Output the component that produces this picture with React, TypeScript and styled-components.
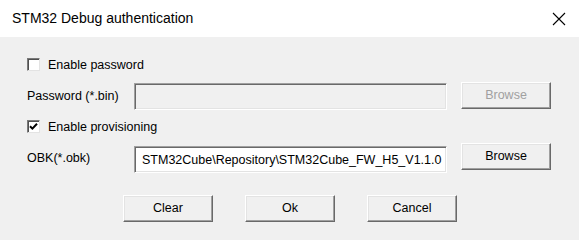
import React, { useState } from 'react';
import styled, { createGlobalStyle } from 'styled-components';

const GlobalStyle = createGlobalStyle`
  html, body {
    margin: 0;
    padding: 0;
    background: #f0f0f0;
  }

  body {
    font-family: "Liberation Sans", Arial, sans-serif;
  }
`;

const Dialog = styled.div`
  width: 579px;
  height: 240px;
  display: flex;
  flex-direction: column;
  background: #f0f0f0;
  overflow: hidden;
`;

const TitleBar = styled.div`
  height: 37px;
  flex-shrink: 0;
  background: #ffffff;
  display: flex;
  align-items: center;
  justify-content: space-between;
  padding: 0 13px 0 12px;
  box-sizing: border-box;
`;

const Title = styled.span`
  font-size: 14px;
  color: #000000;
  padding-bottom: 1px;
`;

const CloseButton = styled.button`
  background: none;
  border: none;
  padding: 0;
  width: 14px;
  height: 14px;
  display: flex;
  margin-top: 1px;
`;

const Body = styled.div`
  display: flex;
  flex-direction: column;
  padding: 21px 0 0 27px;
  font-size: 12.5px;
  color: #000000;
`;

interface RowProps {
  top: number;
  height: number;
}

const Row = styled.div<RowProps>`
  display: flex;
  align-items: center;
  margin-top: ${(props) => props.top}px;
  height: ${(props) => props.height}px;
`;

const CheckRow = styled.label`
  display: flex;
  align-items: center;
  gap: 8px;
  cursor: default;
`;

const Box = styled.span`
  width: 13px;
  height: 13px;
  box-sizing: border-box;
  background: #ffffff;
  border: 1px solid;
  border-color: #7a7a7a #e3e3e3 #e3e3e3 #7a7a7a;
  box-shadow: inset 1px 1px 0 #505050;
  display: flex;
  align-items: center;
  justify-content: center;
`;

const Label = styled.span`
  width: 107px;
  flex-shrink: 0;
`;

interface FieldProps {
  disabled?: boolean;
  offset: number;
}

const Field = styled.div<FieldProps>`
  width: 313px;
  height: 27px;
  box-sizing: border-box;
  align-self: flex-start;
  margin-top: ${(props) => props.offset}px;
  background: ${(props) => (props.disabled ? '#f0f0f0' : '#ffffff')};
  border: 1px solid;
  border-color: #a0a0a0 #ffffff #ffffff #a0a0a0;
  box-shadow: inset 1px 1px 0 #696969, inset -1px -1px 0 #e3e3e3;
  padding: 0 0 0 7px;
  display: flex;
  align-items: center;
  overflow: hidden;
  white-space: nowrap;
  font-size: 12.5px;
`;

interface ButtonProps {
  disabled?: boolean;
}

const Button = styled.button<ButtonProps>`
  width: 90px;
  height: 27px;
  box-sizing: border-box;
  padding: 0 0 1px;
  font-family: "Liberation Sans", Arial, sans-serif;
  font-size: 12.5px;
  color: ${(props) => (props.disabled ? '#a0a0a0' : '#000000')};
  background: #f0f0f0;
  border: 1px solid;
  border-color: #ffffff #696969 #696969 #ffffff;
  box-shadow: inset -1px -1px 0 #a0a0a0, inset 1px 1px 0 #e3e3e3;
`;

const BrowseButton = styled(Button)`
  margin-left: 14px;
  align-self: flex-start;
`;

const Actions = styled.div`
  display: flex;
  gap: 32px;
  margin: 23px 0 0 96px;
`;

function CloseIcon() {
  return (
    <svg width="14" height="14" viewBox="0 0 14 14">
      <path d="M1 1 L13 13 M13 1 L1 13" stroke="#000" strokeWidth="1.1" fill="none" />
    </svg>
  );
}

function CheckMark() {
  return (
    <svg width="9" height="9" viewBox="0 0 9 9">
      <path d="M1 4.2 L3.4 6.6 L8 1.8" stroke="#000" strokeWidth="2" fill="none" />
    </svg>
  );
}

function Checkbox({ checked, text }: { checked: boolean; text: string }) {
  return (
    <CheckRow>
      <Box>{checked && <CheckMark />}</Box>
      <span>{text}</span>
    </CheckRow>
  );
}

export default function App() {
  const [obkPath] = useState('STM32Cube\\Repository\\STM32Cube_FW_H5_V1.1.0');

  return (
    <>
      <GlobalStyle />
      <Dialog>
        <TitleBar>
          <Title>STM32 Debug authentication</Title>
          <CloseButton aria-label="Close">
            <CloseIcon />
          </CloseButton>
        </TitleBar>
        <Body>
          <Row top={0} height={13}>
            <Checkbox checked={false} text="Enable password" />
          </Row>
          <Row top={11} height={28}>
            <Label>Password (*.bin)</Label>
            <Field disabled offset={1} />
            <BrowseButton disabled>Browse</BrowseButton>
          </Row>
          <Row top={10} height={13}>
            <Checkbox checked text="Enable provisioning" />
          </Row>
          <Row top={10} height={29}>
            <Label>OBK(*.obk)</Label>
            <Field offset={3}>{obkPath}</Field>
            <BrowseButton>Browse</BrowseButton>
          </Row>
          <Actions>
            <Button>Clear</Button>
            <Button>Ok</Button>
            <Button>Cancel</Button>
          </Actions>
        </Body>
      </Dialog>
    </>
  );
}
